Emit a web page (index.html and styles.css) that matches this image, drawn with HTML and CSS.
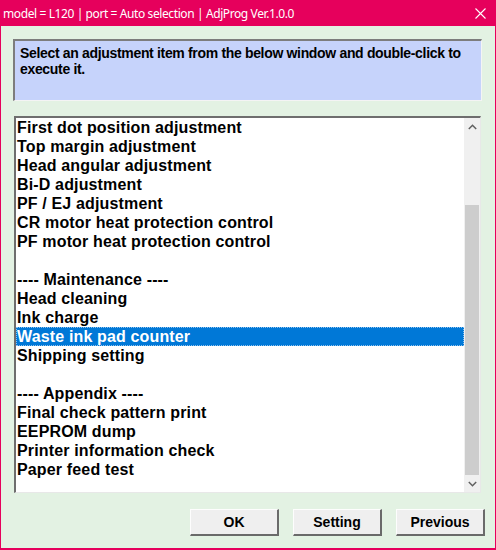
FILE: index.html
```html
<!DOCTYPE html>
<html lang="en">
<head>
<meta charset="utf-8">
<title>AdjProg</title>
<link rel="stylesheet" href="styles.css">
</head>
<body>
<div class="window">
  <div class="titlebar">
    <span class="title">model = L120 | port = Auto selection | AdjProg Ver.1.0.0</span>
    <span class="close">
      <svg width="11" height="11" viewBox="0 0 11 11"><path d="M0.5 0.5 L10.5 10.5 M10.5 0.5 L0.5 10.5" stroke="#fff" stroke-width="1.1" fill="none"/></svg>
    </span>
  </div>
  <div class="client">
    <div class="prompt">Select an adjustment item from the below window and double-click to execute it.</div>
    <div class="listbox">
      <ul class="items">
        <li>First dot position adjustment</li>
        <li>Top margin adjustment</li>
        <li>Head angular adjustment</li>
        <li>Bi-D adjustment</li>
        <li>PF / EJ adjustment</li>
        <li>CR motor heat protection control</li>
        <li>PF motor heat protection control</li>
        <li class="blank"></li>
        <li>---- Maintenance ----</li>
        <li>Head cleaning</li>
        <li>Ink charge</li>
        <li class="selected">Waste ink pad counter</li>
        <li>Shipping setting</li>
        <li class="blank"></li>
        <li>---- Appendix ----</li>
        <li>Final check pattern print</li>
        <li>EEPROM dump</li>
        <li>Printer information check</li>
        <li>Paper feed test</li>
      </ul>
      <div class="scrollbar">
        <div class="arrow">
          <svg width="9" height="6" viewBox="0 0 9 6"><path d="M0.8 5 L4.5 1.3 L8.2 5" stroke="#606060" stroke-width="1.5" fill="none"/></svg>
        </div>
        <div class="track">
          <div class="thumb"></div>
        </div>
        <div class="arrow">
          <svg width="9" height="6" viewBox="0 0 9 6"><path d="M0.8 1 L4.5 4.7 L8.2 1" stroke="#606060" stroke-width="1.5" fill="none"/></svg>
        </div>
      </div>
    </div>
    <div class="buttons">
      <button class="btn">OK</button>
      <button class="btn">Setting</button>
      <button class="btn">Previous</button>
    </div>
  </div>
</div>
</body>
</html>
```
FILE: styles.css
```css
html, body {
  margin: 0;
  padding: 0;
  background: #e3f2e3;
}

.window {
  width: 496px;
  height: 550px;
  box-sizing: border-box;
  display: flex;
  flex-direction: column;
  border: 1px solid #e6005c;
  border-top: none;
  border-bottom-width: 2px;
  background: #e3f2e3;
}

.titlebar {
  height: 26px;
  flex: none;
  background: #e6005c;
  display: flex;
  align-items: center;
  justify-content: space-between;
  padding: 0 10px 0 3px;
  color: #fff;
  font-family: "Noto Sans", "DejaVu Sans", sans-serif;
  font-size: 12px;
  margin: 0 -1px;
}

.title {
  letter-spacing: -0.4px;
}

.close {
  display: flex;
  align-items: center;
}

.client {
  flex: 1;
  display: flex;
  flex-direction: column;
  padding: 13px 13px 0 12px;
  font-family: "Liberation Sans", Arial, sans-serif;
  font-weight: bold;
  color: #000;
}

.prompt {
  height: 62px;
  box-sizing: border-box;
  background: #c6d3fb;
  border-top: 2px solid #7d7d7d;
  border-left: 2px solid #7d7d7d;
  border-right: 1px solid #f4f4f4;
  border-bottom: 1px solid #f4f4f4;
  padding: 4px 0 0 5px;
  font-size: 14px;
  line-height: 16px;
  letter-spacing: -0.33px;
}

.listbox {
  margin-top: 15px;
  margin-right: 1px;
  margin-left: 1px;
  height: 377px;
  box-sizing: border-box;
  display: flex;
  background: #fff;
  border-top: 2px solid #6e6e6e;
  border-left: 2px solid #6e6e6e;
  border-right: 1px solid #e8e8e8;
  border-bottom: 1px solid #e8e8e8;
}

.items {
  flex: 1;
  list-style: none;
  margin: 0;
  padding: 0;
  font-size: 16px;
  line-height: 19px;
  letter-spacing: 0.15px;
}

.items li {
  height: 19px;
  padding-left: 1px;
  white-space: nowrap;
  overflow: hidden;
}

.items li.selected {
  background: #0078d7;
  color: #fff;
  outline: 1px dotted #8ec2ee;
  outline-offset: -1px;
}

.scrollbar {
  width: 16px;
  flex: none;
  display: flex;
  flex-direction: column;
  background: #f0f0f0;
}

.arrow {
  height: 17px;
  display: flex;
  align-items: center;
  justify-content: center;
}

.track {
  flex: 1;
  display: flex;
  flex-direction: column;
  justify-content: flex-end;
}

.thumb {
  height: 270px;
  margin: 0 1px 0 1px;
  background: #cdcdcd;
}

.buttons {
  display: flex;
  justify-content: flex-end;
  gap: 14px;
  margin-top: 16px;
  margin-right: -3px;
}

.btn {
  width: 89px;
  height: 27px;
  box-sizing: border-box;
  background: #efefef;
  border-top: 1px solid #fdfdfd;
  border-left: 1px solid #fdfdfd;
  border-right: 2px solid #6a6a6a;
  border-bottom: 2px solid #6a6a6a;
  font-family: "Liberation Sans", Arial, sans-serif;
  font-weight: bold;
  font-size: 14px;
  color: #000;
  padding: 0;
}
```
